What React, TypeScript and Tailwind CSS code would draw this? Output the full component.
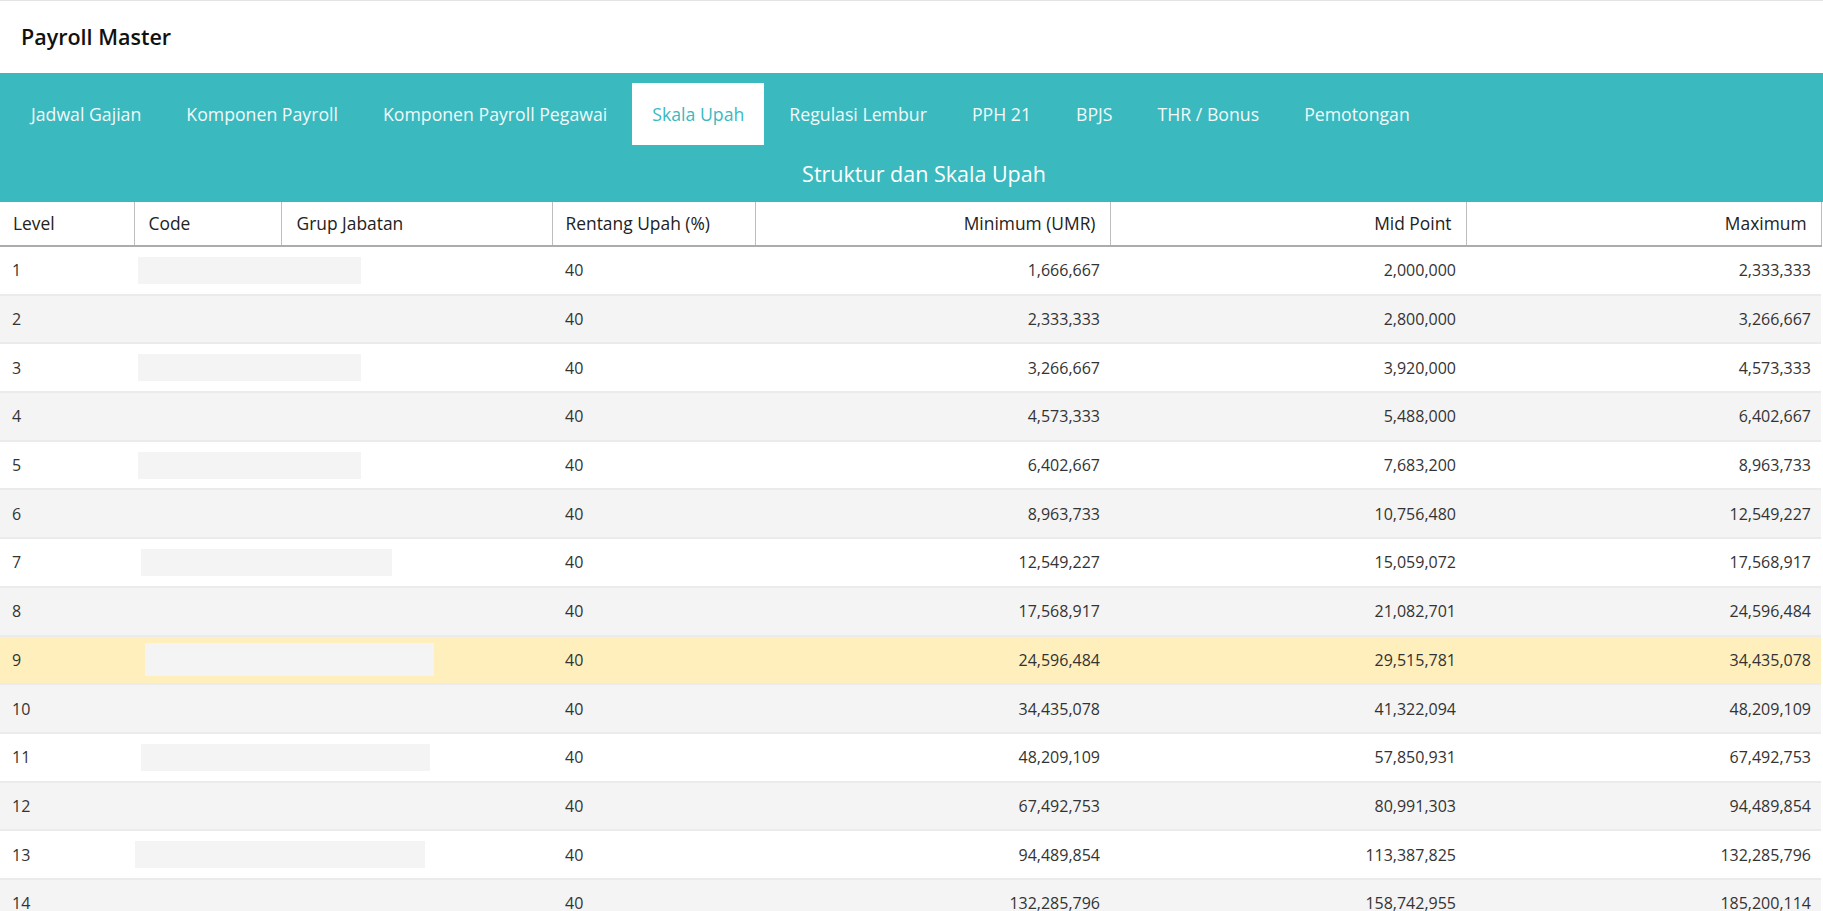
const tabs = [
  'Jadwal Gajian',
  'Komponen Payroll',
  'Komponen Payroll Pegawai',
  'Skala Upah',
  'Regulasi Lembur',
  'PPH 21',
  'BPJS',
  'THR / Bonus',
  'Pemotongan',
]

interface Row {
  level: number
  min: string
  mid: string
  max: string
  bar?: { left: number; width: number; height: number }
}

const rows: Row[] = [
  { level: 1, min: '1,666,667', mid: '2,000,000', max: '2,333,333', bar: { left: 4, width: 223, height: 27 } },
  { level: 2, min: '2,333,333', mid: '2,800,000', max: '3,266,667' },
  { level: 3, min: '3,266,667', mid: '3,920,000', max: '4,573,333', bar: { left: 4, width: 223, height: 27 } },
  { level: 4, min: '4,573,333', mid: '5,488,000', max: '6,402,667' },
  { level: 5, min: '6,402,667', mid: '7,683,200', max: '8,963,733', bar: { left: 4, width: 223, height: 27 } },
  { level: 6, min: '8,963,733', mid: '10,756,480', max: '12,549,227' },
  { level: 7, min: '12,549,227', mid: '15,059,072', max: '17,568,917', bar: { left: 7, width: 251, height: 27 } },
  { level: 8, min: '17,568,917', mid: '21,082,701', max: '24,596,484' },
  { level: 9, min: '24,596,484', mid: '29,515,781', max: '34,435,078', bar: { left: 11, width: 289, height: 33 } },
  { level: 10, min: '34,435,078', mid: '41,322,094', max: '48,209,109' },
  { level: 11, min: '48,209,109', mid: '57,850,931', max: '67,492,753', bar: { left: 7, width: 289, height: 27 } },
  { level: 12, min: '67,492,753', mid: '80,991,303', max: '94,489,854' },
  { level: 13, min: '94,489,854', mid: '113,387,825', max: '132,285,796', bar: { left: 1, width: 290, height: 27 } },
  { level: 14, min: '132,285,796', mid: '158,742,955', max: '185,200,114' },
  { level: 15, min: '185,200,114', mid: '222,240,137', max: '259,280,160', bar: { left: 4, width: 240, height: 27 } },
]

const highlighted = 9

export default function App() {
  return (
    <div className="h-[911px] overflow-hidden bg-white font-['Open_Sans',sans-serif] text-[#333]">
      <header className="h-[73px] border-t border-[#e3e3e3] flex items-center px-[21px]">
        <h1 className="text-[21.5px] font-semibold text-[#111]">Payroll Master</h1>
      </header>

      <div className="bg-[#3ab9bf] h-[129px]">
        <nav className="flex gap-[5px] pt-[10px] pl-[11px]">
          {tabs.map(t => (
            <div
              key={t}
              className={`h-[62px] px-5 flex items-center text-[17.7px] ${
                t === 'Skala Upah' ? 'bg-white text-[#3ab9bf]' : 'text-[#f1fafa]'
              }`}
            >
              {t}
            </div>
          ))}
        </nav>
        <div className="mt-[14px] pl-[25px] text-center text-white text-[21.5px] leading-[30px]">
          Struktur dan Skala Upah
        </div>
      </div>

      <table className="w-[1821px] table-fixed border-collapse text-[16px]">
        <colgroup>
          <col className="w-[134px]" />
          <col className="w-[147px]" />
          <col className="w-[271px]" />
          <col className="w-[203px]" />
          <col className="w-[355px]" />
          <col className="w-[356px]" />
          <col className="w-[355px]" />
        </colgroup>
        <thead>
          <tr className="h-[44px] border-b-2 border-[#acacac] text-[#222] text-[17.4px]">
            <th className="font-normal text-left pl-[13px] border-r border-[#bdbdbd]">Level</th>
            <th className="font-normal text-left pl-[14px] border-r border-[#bdbdbd]">Code</th>
            <th className="font-normal text-left pl-[15px] border-r border-[#bdbdbd]">Grup Jabatan</th>
            <th className="font-normal text-left pl-[13px] border-r border-[#bdbdbd]">Rentang Upah (%)</th>
            <th className="font-normal text-right pr-[14px] border-r border-[#bdbdbd]">Minimum (UMR)</th>
            <th className="font-normal text-right pr-[14px] border-r border-[#bdbdbd]">Mid Point</th>
            <th className="font-normal text-right pr-[14px] border-r border-[#bdbdbd]">Maximum</th>
          </tr>
        </thead>
        <tbody>
          {rows.map((r, i) => (
            <tr
              key={r.level}
              className={`h-[48.7px] border-b-2 border-[#ebebeb] ${
                r.level === highlighted ? 'bg-[#feefbd]' : i % 2 === 1 ? 'bg-[#f4f4f4]' : 'bg-white'
              }`}
            >
              <td className="pl-3 align-middle">{r.level}</td>
              <td colSpan={2} className="align-middle">
                {r.bar && (
                  <div
                    className="bg-[#f4f4f4]"
                    style={{ marginLeft: r.bar.left, width: r.bar.width, height: r.bar.height }}
                  />
                )}
              </td>
              <td className="pl-[13px] align-middle">40</td>
              <td className="text-right pr-[10px] align-middle">{r.min}</td>
              <td className="text-right pr-[10px] align-middle">{r.mid}</td>
              <td className="text-right pr-[10px] align-middle">{r.max}</td>
            </tr>
          ))}
        </tbody>
      </table>
    </div>
  )
}
